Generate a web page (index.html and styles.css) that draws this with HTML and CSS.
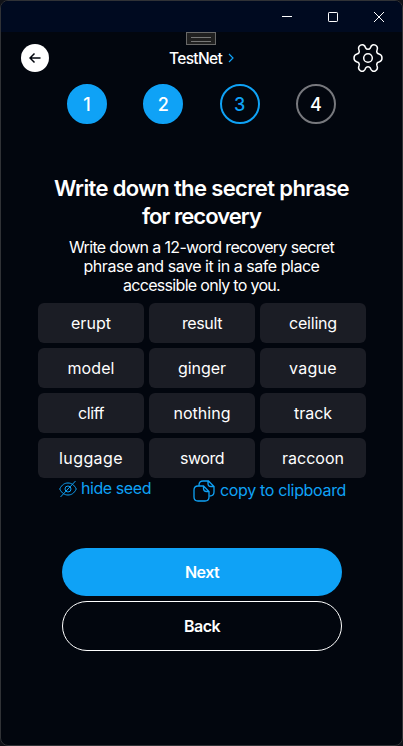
FILE: index.html
```html
<!DOCTYPE html>
<html lang="en">
<head>
<meta charset="utf-8">
<title>TestNet</title>
<link rel="stylesheet" href="styles.css">
</head>
<body>
<div class="window">
  <div class="titlebar">
    <svg viewBox="0 0 12 12"><path d="M1 5.5h10"/></svg>
    <svg viewBox="0 0 12 12"><rect x="1.5" y="1.5" width="9" height="9" rx=".7"/></svg>
    <svg viewBox="0 0 12 12"><path d="M1 1l10 10M11 1L1 11"/></svg>
  </div>
  <div class="handle"></div>
  <header class="header">
    <button class="back-circle" aria-label="Back"><svg viewBox="0 0 12 12"><path d="M11.5 6H1M5.5 1.5L1 6l4.500 4.500"/></svg></button>
    <div class="network"><span class="fit" data-w="53">TestNet</span><svg viewBox="0 0 6 10"><path d="M1 1l4 4-4 4"/></svg></div>
    <svg class="gear" viewBox="0 0 30 30"><path d="M12.600 4.900C11.900 2 9.500.9 7.500 2.200 5.500 3.400 5.300 5.500 6 7.200 6.800 9.300 5.700 10.600 4 11 2 11.500 1 12.900 1 15s1 3.500 3 4c1.700.4 2.800 1.700 2 3.800-.7 1.700-.5 3.800 1.500 5 2 1.300 4.400.2 5.100-2.700.9-1.900 3.900-1.900 4.800 0 .7 2.900 3.100 4 5.100 2.700 2-1.200 2.200-3.300 1.500-5-.8-2.100.3-3.400 2-3.800 2-.5 3-1.900 3-4s-1-3.500-3-4c-1.700-.4-2.800-1.700-2-3.800.7-1.700.5-3.800-1.500-5-2-1.300-4.400-.2-5.100 2.700-.9 1.900-3.900 1.900-4.800 0z"/><circle cx="15" cy="15" r="4.300"/></svg>
  </header>
  <ol class="steps">
    <li class="step done">1</li><li class="step done">2</li><li class="step current">3</li><li class="step">4</li>
  </ol>
  <main class="content">
    <h1><span class="fit" data-w="295">Write down the secret phrase</span><br><span class="fit" data-w="119">for recovery</span></h1>
    <p><span class="fit" data-w="265">Write down a 12-word recovery secret</span><br><span class="fit" data-w="236">phrase and save it in a safe place</span><br><span class="fit" data-w="157">accessible only to you.</span></p>
    <div class="words">
      <div><span class="fit" data-w="40">erupt</span></div><div><span class="fit" data-w="40">result</span></div><div><span class="fit" data-w="48">ceiling</span></div>
      <div><span class="fit" data-w="47">model</span></div><div><span class="fit" data-w="48">ginger</span></div><div><span class="fit" data-w="48">vague</span></div>
      <div><span class="fit" data-w="26">cliff</span></div><div><span class="fit" data-w="57">nothing</span></div><div><span class="fit" data-w="38">track</span></div>
      <div><span class="fit" data-w="64">luggage</span></div><div><span class="fit" data-w="44">sword</span></div><div><span class="fit" data-w="62">raccoon</span></div>
    </div>
    <div class="actions">
      <a class="hide"><svg viewBox="0 0 18 18"><path d="M.7 9C3 4.500 5.700 3 9 3s6 1.500 8.300 6C15 13.500 12.300 15 9 15S3 13.500.7 9z"/><circle cx="9" cy="9" r="3"/><path d="M1.500 17L16.500 1"/></svg><span class="fit" data-w="70">hide seed</span></a>
      <a class="copy"><svg viewBox="0 0 22 22"><path d="M6 6V5q0-4 4-4h5.500L21 6.500V12q0 4-4.500 4M15 1v2.500q0 3 3 3h3"/><path d="M10.500 6H5Q1 6 1 10v7q0 4 4 4h7q4 0 4-4v-5.500zM10.500 6v2.500q0 3 3 3H16"/></svg><span class="fit" data-w="126">copy to clipboard</span></a>
    </div>
    <button class="btn next"><span class="fit" data-w="34">Next</span></button>
    <button class="btn back"><span class="fit" data-w="36">Back</span></button>
  </main>
</div>
<script src="script.js"></script>
</body>
</html>
```
FILE: styles.css
```css
* { box-sizing: border-box; }
body { margin: 0; background: #101218; color: #fff; font-family: Inter, "Liberation Sans", sans-serif; }
.window { position: relative; width: 403px; height: 746px; border: 1px solid #303236; border-radius: 8px; background: #02060e; overflow: hidden; }
svg { fill: none; stroke: currentColor; flex: none; }
.fit { display: inline-block; white-space: nowrap; }
.titlebar { height: 31px; background: #000a20; display: flex; justify-content: flex-end; align-items: center; gap: 34px; padding-right: 17px; }
.titlebar svg { width: 12px; height: 12px; }
.handle { position: absolute; left: 185px; top: 31px; width: 30px; height: 13px; background: #202020; border: 1px solid #686868; }
.handle::after { content: ""; position: absolute; left: 4px; top: 4px; width: 20px; height: 3px; border: solid #777; border-width: 1px 0; }
.header { height: 52px; display: flex; align-items: center; justify-content: space-between; padding: 0 19px 0 20px; }
.back-circle { width: 28px; height: 28px; border: 0; border-radius: 50%; background: #fff; color: #02060e; padding: 0; display: grid; place-items: center; }
.back-circle svg { width: 12px; height: 12px; stroke-width: 1.5; }
.network { display: flex; align-items: center; gap: 6px; font-size: 15.5px; font-weight: 500; margin-left: 1px; }
.network svg { width: 6px; height: 10px; color: #0fa2f6; stroke-width: 1.2; }
.gear { width: 30px; height: 30px; stroke-width: 1.5; }
.steps { list-style: none; margin: 0; padding: 0 66px; display: flex; justify-content: space-between; }
.step { width: 40px; height: 40px; border-radius: 50%; border: 2px solid #77787d; display: grid; place-items: center; font-size: 18px; font-weight: 500; }
.done { background: #0fa2f6; border-color: #0fa2f6; }
.current { color: #0fa2f6; border-color: #0fa2f6; }
.content { padding: 50px 36px 0 37px; }
h1 { margin: 0; font-size: 22px; line-height: 28px; font-weight: 600; text-align: center; }
p { margin: 8px 0; font-size: 16px; line-height: 19px; text-align: center; }
h1, p { position: relative; left: -0.5px; }
.words { display: grid; grid-template-columns: repeat(3, 106px); gap: 5px; }
.words div { height: 40px; background: #1b1d25; border-radius: 6px; display: grid; place-items: center; font-size: 16px; }
.actions { display: flex; height: 70px; color: #0fa2f6; font-size: 16px; }
.actions a { display: flex; align-items: center; height: 22px; }
.actions .fit { margin-top: -2px; }
.hide { margin-left: 21px; gap: 4px; }
.hide svg { width: 18px; height: 18px; stroke-width: 1; }
.copy { margin: 2px 0 0 42px; gap: 5px; }
.copy svg { width: 22px; height: 22px; stroke-width: 1.3; }
.btn { display: grid; place-items: center; width: 280px; margin-left: 24px; color: #fff; font: 600 16px Inter, "Liberation Sans", sans-serif; padding: 0; border-radius: 25px; }
.next { height: 48px; background: #0fa2f6; border: 0; }
.back { height: 50px; margin-top: 5px; background: transparent; border: 1px solid #fff; }
```
FILE: script.js
```js
// Track each label so that it occupies its designed width.
document.querySelectorAll(".fit").forEach(function (el) {
  var gap = Number(el.dataset.w) - el.getBoundingClientRect().width;
  el.style.letterSpacing = gap / el.textContent.length + "px";
});
```
